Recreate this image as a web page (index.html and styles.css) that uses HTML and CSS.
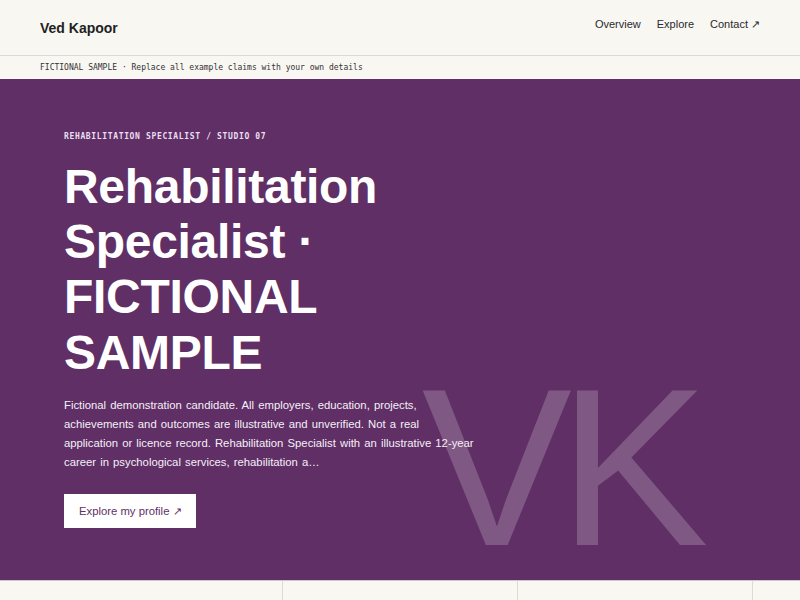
FILE: index.html
```html
<!DOCTYPE html>
<html lang="en">
<head>
<meta charset="utf-8">
<title>Ved Kapoor</title>
<link rel="stylesheet" href="styles.css">
</head>
<body>
<header class="site-header">
  <div class="brand">Ved Kapoor</div>
  <nav class="nav">
    <a href="#overview">Overview</a>
    <a href="#explore">Explore</a>
    <a href="#contact">Contact ↗</a>
  </nav>
</header>
<div class="notice">FICTIONAL SAMPLE · Replace all example claims with your own details</div>
<section class="hero">
  <div class="hero-inner">
    <p class="eyebrow">REHABILITATION SPECIALIST / STUDIO 07</p>
    <h1 class="title">Rehabilitation Specialist · FICTIONAL SAMPLE</h1>
    <p class="lead">Fictional demonstration candidate. All employers, education, projects, achievements and outcomes are illustrative and unverified. Not a real application or licence record. Rehabilitation Specialist with an illustrative 12-year career in psychological services, rehabilitation a…</p>
    <a class="btn" href="#explore">Explore my profile ↗</a>
  </div>
  <div class="monogram" aria-hidden="true">VK</div>
</section>
<div class="strip">
  <div class="cell"></div>
  <div class="cell"></div>
  <div class="cell"></div>
  <div class="cell"></div>
</div>
</body>
</html>
```
FILE: styles.css
```css
* { box-sizing: border-box; }
html, body { margin: 0; padding: 0; }
body {
  background: #f8f7f2;
  font-family: "Liberation Sans", Arial, sans-serif;
  color: #222;
  overflow: hidden;
}
.site-header {
  height: 56px;
  display: flex;
  justify-content: space-between;
  align-items: flex-start;
  padding: 0 40px;
  border-bottom: 1px solid #dcdad4;
}
.brand {
  font-size: 14px;
  font-weight: 700;
  color: #1f1f24;
  margin-top: 20px;
}
.nav {
  display: flex;
  gap: 16px;
  margin-top: 18px;
}
.nav a {
  font-size: 11px;
  color: #2a2a2e;
  text-decoration: none;
}
.notice {
  height: 23px;
  padding: 0 40px;
  display: flex;
  align-items: center;
  font-family: "DejaVu Sans Mono", "Liberation Mono", monospace;
  font-size: 8px;
  color: #333;
}
.hero {
  position: relative;
  background: #5f2f66;
  color: #fff;
  height: 501px;
  overflow: hidden;
}
.hero-inner {
  position: relative;
  z-index: 1;
  padding: 52px 64px 0;
}
.eyebrow {
  margin: 0 0 16px;
  font-family: "DejaVu Sans Mono", "Liberation Mono", monospace;
  font-size: 8px;
  font-weight: 700;
  letter-spacing: 0.65px;
  line-height: 12px;
  color: #eadff0;
}
.title {
  margin: 0;
  font-size: 48px;
  line-height: 1.15;
  font-weight: 700;
  letter-spacing: -0.3px;
  max-width: 380px;
}
.lead {
  margin: 16px 0 0;
  max-width: 413px;
  font-size: 11.3px;
  line-height: 19px;
  word-spacing: 1px;
  color: #f6eff7;
}
.btn {
  display: inline-block;
  margin-top: 22px;
  background: #fff;
  color: #5f2f66;
  font-size: 11.3px;
  line-height: 34px;
  height: 34px;
  padding: 0 14px 0 15px;
  text-decoration: none;
}
.monogram {
  position: absolute;
  right: 105px;
  bottom: 0;
  font-size: 225px;
  line-height: 1;
  letter-spacing: -0.06em;
  color: rgba(255, 255, 255, 0.2);
  z-index: 0;
}
.strip {
  display: grid;
  grid-template-columns: 282px 235px 235px 1fr;
  height: 20px;
  border-top: 1px solid #cfc6d0;
}
.cell + .cell { border-left: 1px solid #dedbd4; }
```
